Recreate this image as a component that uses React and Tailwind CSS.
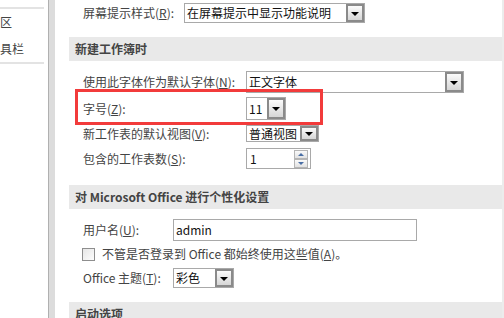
import React from "react";

function DropBtn() {
  return (
    <div className="w-[18px] h-full shrink-0 border-2 border-[#8a8a8a] bg-linear-to-b from-[#fbfbfb] to-[#d6d6d6] flex items-center justify-center">
      <div className="w-0 h-0 border-l-[4px] border-r-[4px] border-t-[4px] border-l-transparent border-r-transparent border-t-black mt-[1px]" />
    </div>
  );
}

function Select({ value, w, h = "h-[20px]" }) {
  return (
    <div className={`${w} ${h} shrink-0 flex border border-[#a9a9a9] bg-white`}>
      <div className="flex-1 flex items-center pl-[2px] text-[#111] overflow-hidden whitespace-nowrap">{value}</div>
      <DropBtn />
    </div>
  );
}

function Label({ w, children }) {
  return <div className={`${w} shrink-0 whitespace-nowrap`}>{children}</div>;
}

function Header({ children }) {
  return (
    <div className="h-[24px] shrink-0 bg-[#e9e9e9] flex items-center pl-[6px] font-bold text-[#444] whitespace-nowrap">
      {children}
    </div>
  );
}

function SpinBtn({ up }) {
  return (
    <div className="w-[14px] h-[9px] border border-[#b5b5b5] bg-linear-to-b from-[#fafafa] to-[#e2e2e2] flex items-center justify-center">
      {up ? (
        <div className="w-0 h-0 border-l-[3px] border-r-[3px] border-b-[3px] border-l-transparent border-r-transparent border-b-[#4a6fa5]" />
      ) : (
        <div className="w-0 h-0 border-l-[3px] border-r-[3px] border-t-[3px] border-l-transparent border-r-transparent border-t-[#4a6fa5]" />
      )}
    </div>
  );
}

export default function App() {
  return (
    <div
      className="w-[504px] h-[318px] flex overflow-hidden bg-white text-[12px] leading-none text-[#444]"
      style={{ fontFamily: '"Noto Sans CJK SC", "Noto Sans", sans-serif' }}
    >
      {/* left nav */}
      <div className="w-[48px] shrink-0 flex flex-col">
        <div className="h-[7px] shrink-0" />
        <div className="w-[44px] h-[2px] shrink-0 bg-[#e3e3e3]" />
        <div className="h-[26px] shrink-0 flex items-center">
          <span className="whitespace-nowrap">区</span>
        </div>
        <div className="h-[27px] shrink-0 flex items-center">
          <span className="whitespace-nowrap">具栏</span>
        </div>
        <div className="w-[44px] h-[2px] shrink-0 bg-[#e3e3e3]" />
      </div>
      {/* separator */}
      <div className="w-[7px] shrink-0 bg-[#dcdcdc] border-l border-[#b0b0b0]" />
      {/* content */}
      <div className="relative flex-1 flex flex-col pl-[14px] overflow-hidden">
        <div className="h-[20px] shrink-0 mt-[3px] flex items-center pl-[14px]">
          <Label w="w-[101px]">
            屏幕提示样式(<u>R</u>):
          </Label>
          <Select value="在屏幕提示中显示功能说明" w="w-[181px]" />
        </div>
        <div className="mt-[14px] shrink-0">
          <Header>新建工作簿时</Header>
        </div>
        <div className="h-[22px] shrink-0 mt-[10px] flex items-center pl-[14px]">
          <Label w="w-[163px]">
            使用此字体作为默认字体(<u>N</u>):
          </Label>
          <Select value="正文字体" w="w-[218px]" h="h-[22px]" />
        </div>
        <div className="h-[23px] shrink-0 mt-[4px] flex items-center pl-[14px]">
          <Label w="w-[163px]">
            字号(<u>Z</u>):
          </Label>
          <Select value="11" w="w-[40px]" h="h-[23px]" />
        </div>
        <div className="h-[17px] shrink-0 mt-[5px] flex items-center pl-[14px]">
          <Label w="w-[163px]">
            新工作表的默认视图(<u>V</u>):
          </Label>
          <Select value="普通视图" w="w-[73px]" h="h-[17px]" />
        </div>
        <div className="h-[21px] shrink-0 mt-[6px] flex items-center pl-[14px]">
          <Label w="w-[163px]">
            包含的工作表数(<u>S</u>):
          </Label>
          <div className="w-[65px] h-[21px] shrink-0 flex items-center border border-[#a9a9a9] bg-white">
            <div className="flex-1 pl-[3px] text-[#111]">1</div>
            <div className="flex flex-col mr-[2px]">
              <SpinBtn up />
              <SpinBtn />
            </div>
          </div>
        </div>
        <div className="mt-[16px] shrink-0">
          <Header>对 Microsoft Office 进行个性化设置</Header>
        </div>
        <div className="h-[22px] shrink-0 mt-[10px] flex items-center pl-[14px]">
          <Label w="w-[90px]">
            用户名(<u>U</u>):
          </Label>
          <div className="w-[244px] h-[22px] shrink-0 border border-[#a9a9a9] bg-white flex items-center pl-[2px] text-[#111]">
            admin
          </div>
        </div>
        <div className="h-[20px] shrink-0 mt-[3px] flex items-center pl-[13px]">
          <div className="w-[13px] h-[13px] border border-[#8e8e8e] bg-linear-to-br from-[#e6e6e6] to-[#fdfdfd] shrink-0" />
          <span className="ml-[7px] whitespace-nowrap">
            不管是否登录到 Office 都始终使用这些值(<u>A</u>)。
          </span>
        </div>
        <div className="h-[20px] shrink-0 mt-[4px] flex items-center pl-[14px]">
          <Label w="w-[90px]">
            Office 主题(<u>T</u>):
          </Label>
          <Select value="彩色" w="w-[61px]" />
        </div>
        <div className="mt-[14px] shrink-0">
          <Header>启动选项</Header>
        </div>
        {/* red annotation */}
        <div className="absolute left-[20px] top-[89px] w-[248px] h-[36px] border-[3px] border-[#f23b3b]" />
      </div>
      <div className="w-[2px] shrink-0 bg-[#ececec]" />
    </div>
  );
}
